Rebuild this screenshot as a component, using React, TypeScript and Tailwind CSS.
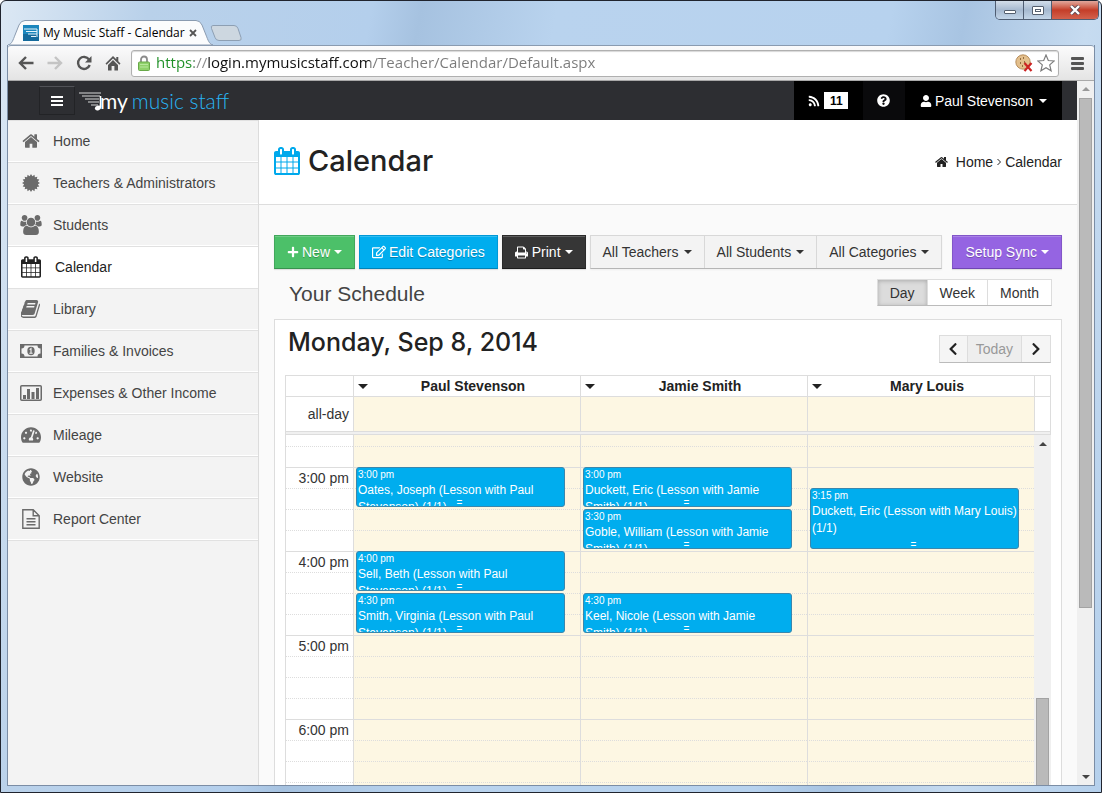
import type { ReactNode } from "react";
import {
  FaChevronLeft,
  FaChevronRight,
  FaGlobeAmericas,
  FaPlus,
  FaQuestionCircle,
  FaRegEdit,
  FaRss,
  FaTachometerAlt,
  FaUser,
} from "react-icons/fa";

type IconProps = { className?: string };

function HomeIcon({ className }: IconProps) {
  return (
    <svg viewBox="64 128 1664 1536" fill="currentColor" className={className} aria-hidden="true">
      <path d="M1472 992v480q0 26-19 45t-45 19h-384v-384h-256v384h-384q-26 0-45-19t-19-45v-480q0-1 .5-3t.5-3l575-474 575 474q1 2 1 6zm223-69l-62 74q-8 9-21 11h-3q-13 0-21-7l-692-577-692 577q-12 8-24 7-13-2-21-11l-62-74q-8-10-7-23.5t11-21.5l719-599q32-26 76-26t76 26l244 204v-195q0-14 9-23t23-9h192q14 0 23 9t9 23v408l219 182q10 8 11 21.5t-7 23.5z" />
    </svg>
  );
}

function CalendarIcon({ className }: IconProps) {
  return (
    <svg viewBox="64 0 1664 1792" fill="currentColor" className={className} aria-hidden="true">
      <path d="M192 1664h288v-288h-288v288zm352 0h320v-288h-320v288zm-352-352h288v-320h-288v320zm352 0h320v-320h-320v320zm-352-384h288v-288h-288v288zm736 736h320v-288h-320v288zm-384-736h320v-288h-320v288zm768 736h288v-288h-288v288zm-384-352h320v-320h-320v320zm-352-864v-288q0-13-9.5-22.5t-22.5-9.5h-64q-13 0-22.5 9.5t-9.5 22.5v288q0 13 9.5 22.5t22.5 9.5h64q13 0 22.5-9.5t9.5-22.5zm736 864h288v-320h-288v320zm-384-384h320v-288h-320v288zm384 0h288v-288h-288v288zm32-480v-288q0-13-9.5-22.5t-22.5-9.5h-64q-13 0-22.5 9.5t-9.5 22.5v288q0 13 9.5 22.5t22.5 9.5h64q13 0 22.5-9.5t9.5-22.5zm384-64v1280q0 52-38 90t-90 38h-1408q-52 0-90-38t-38-90v-1280q0-52 38-90t90-38h128v-96q0-66 47-113t113-47h64q66 0 113 47t47 113v96h384v-96q0-66 47-113t113-47h64q66 0 113 47t47 113v96h128q52 0 90 38t38 90z" />
    </svg>
  );
}

function GroupIcon({ className }: IconProps) {
  return (
    <svg viewBox="-64 0 1920 1792" fill="currentColor" className={className} aria-hidden="true">
      <path d="M529 896q-162 5-265 128h-134q-82 0-138-40.5t-56-118.5q0-353 124-353 6 0 43.5 21t97.5 42.5 119 21.5q67 0 133-23-5 37-5 66 0 139 81 256zm1071 637q0 120-73 189.5t-194 69.5h-874q-121 0-194-69.5t-73-189.5q0-53 3.5-103.5t14-109 26.5-108.5 43-97.5 62-81 85.5-53.5 111.5-20q10 0 43 21.5t73 48 107 48 135 21.5 135-21.5 107-48 73-48 43-21.5q61 0 111.5 20t85.5 53.5 62 81 43 97.5 26.5 108.5 14 109 3.5 103.5zm-1024-1277q0 106-75 181t-181 75-181-75-75-181 75-181 181-75 181 75 75 181zm704 384q0 159-112.5 271.5t-271.5 112.5-271.5-112.5-112.5-271.5 112.5-271.5 271.5-112.5 271.5 112.5 112.5 271.5zm576 225q0 78-56 118.5t-138 40.5h-134q-103-123-265-128 81-117 81-256 0-29-5-66 66 23 133 23 59 0 119-21.5t97.5-42.5 43.5-21q124 0 124 353zm-128-609q0 106-75 181t-181 75-181-75-75-181 75-181 181-75 181 75 75 181z" />
    </svg>
  );
}

function BookIcon({ className }: IconProps) {
  return (
    <svg viewBox="64 128 1664 1536" fill="currentColor" className={className} aria-hidden="true">
      <path d="M1639 478q40 57 18 129l-275 906q-19 64-76.5 107.5t-122.5 43.5h-923q-77 0-148.5-53.5t-99.5-131.5q-24-67-2-127 0-4 3-27t4-37q1-8-3-21.5t-3-19.5q2-11 8-21t16.5-23.5 16.5-23.5q23-38 45-91.5t30-91.5q3-10 .5-30t-.5-28q3-11 17-28t17-23q21-36 42-92t25-90q1-9-2.5-32t.5-28q4-13 22-30.5t22-22.5q19-26 42.5-84.5t27.5-96.5q1-8-3-25.5t-2-26.5q2-8 9-18t18-23 17-21q8-12 16.5-30.5t15-35 16-36 19.5-32 26.5-23.5 36-11.5 47.5 5.5l-1 3q38-9 51-9h761q74 0 114 56t18 130l-274 906q-36 119-71.5 153.5t-128.5 34.5h-869q-27 0-38 15-11 16-1 43 24 70 144 70h923q29 0 56-15.5t35-41.5l300-987q7-22 5-57 38 15 59 43zm-1064 2q-4 13 2 22.5t20 9.5h608q13 0 25.5-9.5t16.5-22.5l21-64q4-13-2-22.5t-20-9.5h-608q-13 0-25.5 9.5t-16.5 22.5zm-83 256q-4 13 2 22.5t20 9.5h608q13 0 25.5-9.5t16.5-22.5l21-64q4-13-2-22.5t-20-9.5h-608q-13 0-25.5 9.5t-16.5 22.5z" />
    </svg>
  );
}

function PrintIcon({ className }: IconProps) {
  return (
    <svg viewBox="64 128 1664 1536" fill="currentColor" className={className} aria-hidden="true">
      <path d="M448 1536h896v-256h-896v256zm0-640h896v-384h-160q-40 0-68-28t-28-68v-160h-640v640zm1152 64q0-26-19-45t-45-19-45 19-19 45 19 45 45 19 45-19 19-45zm128 0v416q0 13-9.5 22.5t-22.5 9.5h-224v160q0 40-28 68t-68 28h-960q-40 0-68-28t-28-68v-160h-224q-13 0-22.5-9.5t-9.5-22.5v-416q0-79 56.5-135.5t135.5-56.5h64v-544q0-40 28-68t68-28h672q40 0 88 20t76 48l152 152q28 28 48 76t20 88v256h64q79 0 135.5 56.5t56.5 135.5z" />
    </svg>
  );
}

function SealIcon({ className }: IconProps) {
  const points = Array.from({ length: 32 }, (_, i) => {
    const r = i % 2 ? 7 : 9;
    const a = (i * Math.PI) / 16;
    return `${9 + r * Math.sin(a)},${9 - r * Math.cos(a)}`;
  }).join(" ");
  return (
    <svg viewBox="0 0 18 18" fill="currentColor" className={className} aria-hidden="true">
      <polygon points={points} />
    </svg>
  );
}

function MoneyIcon({ className }: IconProps) {
  return (
    <svg viewBox="0 0 22 14" className={className} aria-hidden="true">
      <path fill="currentColor" fillRule="evenodd" d="M0 0h22v14H0zM4.5 1.5a3 3 0 0 1-3 3v5a3 3 0 0 1 3 3h13a3 3 0 0 1 3-3v-5a3 3 0 0 1-3-3z" />
      <ellipse cx="11" cy="7" rx="3.7" ry="4.2" fill="currentColor" />
      <path d="M9.6 5.6 11 4.6V9M9.4 9.3h3.2" fill="none" stroke="#f3f3f3" strokeWidth="1.1" />
    </svg>
  );
}

function BarsIcon({ className }: IconProps) {
  return (
    <svg viewBox="0 0 22 16" className={className} aria-hidden="true">
      <rect x=".75" y=".75" width="20.5" height="14.5" rx="1" fill="none" stroke="currentColor" strokeWidth="1.5" />
      <path d="M3 10h3v4H3zM7 4h3v10H7zM11.500 7h3v7h-3zM16 3h3v11h-3z" fill="currentColor" />
    </svg>
  );
}

function ReportIcon({ className }: IconProps) {
  return (
    <svg viewBox="0 0 18 20" fill="none" stroke="currentColor" strokeWidth="1.4" className={className} aria-hidden="true">
      <path d="M.8.8h10.400l6 6v12.400H.8zM11.200.8v6h6M4.500 9.700h9M4.500 12.700h9M4.500 15.700h9" />
    </svg>
  );
}

function Triangle({ className, up }: IconProps & { up?: boolean }) {
  return (
    <svg viewBox="0 0 8 4" fill="currentColor" className={className} aria-hidden="true">
      <path d={up ? "M0 4h8L4 0z" : "M0 0h8L4 4z"} />
    </svg>
  );
}

function Caret() {
  return <Triangle className="ml-1 h-1 w-2 shrink-0" />;
}

const navItems: { label: string; icon: ReactNode; active?: boolean }[] = [
  { label: "Home", icon: <HomeIcon className="h-4 w-5" /> },
  { label: "Teachers & Administrators", icon: <SealIcon className="size-[18px]" /> },
  { label: "Students", icon: <GroupIcon className="h-5 w-[22px]" /> },
  { label: "Calendar", icon: <CalendarIcon className="h-[22px] w-5" />, active: true },
  { label: "Library", icon: <BookIcon className="h-[18px] w-5" /> },
  { label: "Families & Invoices", icon: <MoneyIcon className="h-3.5 w-[22px]" /> },
  { label: "Expenses & Other Income", icon: <BarsIcon className="h-4 w-[22px]" /> },
  { label: "Mileage", icon: <FaTachometerAlt className="h-[18px] w-5" /> },
  { label: "Website", icon: <FaGlobeAmericas className="size-[18px]" /> },
  { label: "Report Center", icon: <ReportIcon className="h-5 w-[18px]" /> },
];

const teachers = ["Paul Stevenson", "Jamie Smith", "Mary Louis"];

type Lesson = { teacher: number; slot: number; tall?: boolean; time: string; title: string };

// slot = number of quarter hours after 3:00 pm
const lessons: Lesson[] = [
  { teacher: 0, slot: 0, time: "3:00 pm", title: "Oates, Joseph (Lesson with Paul Stevenson) (1/1)" },
  { teacher: 0, slot: 4, time: "4:00 pm", title: "Sell, Beth (Lesson with Paul Stevenson) (1/1)" },
  { teacher: 0, slot: 6, time: "4:30 pm", title: "Smith, Virginia (Lesson with Paul Stevenson) (1/1)" },
  { teacher: 1, slot: 0, time: "3:00 pm", title: "Duckett, Eric (Lesson with Jamie Smith) (1/1)" },
  { teacher: 1, slot: 2, time: "3:30 pm", title: "Goble, William (Lesson with Jamie Smith) (1/1)" },
  { teacher: 1, slot: 6, time: "4:30 pm", title: "Keel, Nicole (Lesson with Jamie Smith) (1/1)" },
  { teacher: 2, slot: 1, tall: true, time: "3:15 pm", title: "Duckett, Eric (Lesson with Mary Louis) (1/1)" },
];

const slots = Array.from({ length: 24 }, (_, i) => i - 1);

function Logo() {
  return (
    <a href="#home" className="ml-1 flex items-center font-[Lato,sans-serif] text-[21px] leading-7 font-light">
      <svg viewBox="0 0 25 20" className="-mr-1 h-5 w-[25px]" aria-hidden="true">
        <path d="M0 2h22M3 5h18M6 8h14M9 11h11M12 14h7" stroke="#d8d8d8" strokeWidth="1.2" />
        <path d="M21.500 5v11" stroke="#fff" strokeWidth="1.600" />
        <ellipse cx="19" cy="17" rx="3.200" ry="2.300" fill="#fff" transform="rotate(-20 19 17)" />
      </svg>
      <span className="font-normal text-white">my</span>
      <span className="ml-1 text-[#29b4f2]">music staff</span>
    </a>
  );
}

function TitleBar() {
  return (
    <div className="flex h-[44px] items-end pl-px">
      <div className="relative flex h-[25px] w-[206px] shrink-0 items-center pl-[15px]">
        <svg viewBox="0 0 206 25" preserveAspectRatio="none" className="absolute inset-0 size-full" aria-hidden="true">
          <path d="M0 25C4 24 5 20 7 15l4-10q2-4.500 6-4.500h171q4 0 6 4.500l4 10c2 5 3 9 7 10z" fill="#fbfcfd" stroke="#8a9bb0" />
        </svg>
        <svg viewBox="0 0 16 16" className="relative size-4" aria-hidden="true">
          <path fill="#1b86bd" d="M0 0h16v16H0z" />
          <path fill="#156a9c" d="M0 9h16v7H0z" />
          <path d="M1 4h13M3 6.500h11M5 9h9M8 11.500h5M14 4v8" stroke="#e6f4fb" fill="none" />
        </svg>
        <span className="relative ml-1 font-['Open_Sans',sans-serif] text-xs whitespace-nowrap text-black">
          My Music Staff - Calendar
        </span>
        <button type="button" aria-label="Close tab" className="relative ml-1 size-2 shrink-0 text-[#555]">
          <svg viewBox="0 0 8 8" stroke="currentColor" strokeWidth="1.800">
            <path d="m1 1 6 6M7 1 1 7" />
          </svg>
        </button>
      </div>
      <button type="button" aria-label="New tab" className="-ml-1 mb-1 h-4 w-8 text-[#8d9fb3]">
        <svg viewBox="0 0 32 16" className="size-full" fill="#cdd7e0" stroke="currentColor">
          <path d="M3 .5h21q3 0 4 3l3 9q1 3-2 3H9q-3 0-4-3L1.500 3.500q-1-3 1.500-3z" />
        </svg>
      </button>
      <div className="-mr-1 ml-auto flex h-[19px] self-start overflow-hidden rounded-b-[5px] border border-t-0 border-[#4f5d72]">
        <button type="button" aria-label="Minimize" className="flex w-7 items-center justify-center border-r border-[#4f5d72] bg-linear-to-b from-[#d3deea] via-[#a6b9d0] to-[#c3d5e8]">
          <span className="mt-1 h-1 w-3 rounded-[1px] border border-[#555f6e] bg-white" />
        </button>
        <button type="button" aria-label="Maximize" className="flex w-7 items-center justify-center border-r border-[#4f5d72] bg-linear-to-b from-[#d3deea] via-[#a6b9d0] to-[#c3d5e8]">
          <span className="flex h-[9px] w-3 items-center justify-center rounded-[1px] border border-[#555f6e] bg-white">
            <span className="h-[3px] w-1.5 border border-[#555f6e]" />
          </span>
        </button>
        <button type="button" aria-label="Close" className="flex w-[46px] items-center justify-center bg-linear-to-b from-[#e0a79c] via-[#c43d28] to-[#d3614c]">
          <svg viewBox="0 0 12 10" className="h-2.5 w-3" aria-hidden="true">
            <path d="m2 1 8 8M10 1 2 9" stroke="#5b4a52" strokeWidth="4" />
            <path d="m2 1 8 8M10 1 2 9" stroke="#fff" strokeWidth="2.400" />
          </svg>
        </button>
      </div>
    </div>
  );
}

function Toolbar() {
  return (
    <div className="flex h-9 items-center rounded-t-[3px] border-t border-b border-t-[#8a9bb0] border-b-[#a9a9a9] bg-linear-to-b from-[#fbfbfc] to-[#e4e4e4] px-2.5 text-[#555]">
      <button type="button" aria-label="Back">
        <svg viewBox="0 0 16 14" className="h-3.5 w-4" fill="none" stroke="currentColor" strokeWidth="2.400">
          <path d="M8 1 2 7l6 6M2 7h13.500" />
        </svg>
      </button>
      <button type="button" aria-label="Forward" className="ml-[13px] text-[#c4c4c4]">
        <svg viewBox="0 0 16 14" className="h-3.5 w-4" fill="none" stroke="currentColor" strokeWidth="2.400">
          <path d="m8 1 6 6-6 6M14 7H.5" />
        </svg>
      </button>
      <button type="button" aria-label="Reload" className="ml-[13px]">
        <svg viewBox="0 0 16 16" className="size-4">
          <path d="M13 4.500A6 6 0 1 0 13.700 10" fill="none" stroke="currentColor" strokeWidth="2.400" />
          <path d="M15.500 1v6.500H9z" fill="currentColor" />
        </svg>
      </button>
      <button type="button" aria-label="Home page" className="ml-[13px]">
        <svg viewBox="0 0 16 16" className="size-4" fill="currentColor">
          <path d="M8 1 .5 8.500 1.600 9.700 8 3.500l6.400 6.200 1.100-1.200-2.200-2.200V2h-2v2.300zM3 10v5.500h3.600V11h2.800v4.500H13V10L8 5z" />
        </svg>
      </button>
      <div className="ml-[10px] flex h-[27px] flex-1 items-center rounded-[3px] border border-[#b0b0b0] bg-white pr-[3px] pl-1.5 shadow-[inset_0_1px_1px_#d8d8d8]">
        <svg viewBox="0 0 12 16" className="h-4 w-3" aria-hidden="true">
          <path d="M3 8V4.500a3 3 0 0 1 6 0V8" fill="none" stroke="#8b8b8b" strokeWidth="1.800" />
          <rect x=".5" y="7" width="11" height="8.500" rx="1" fill="#8fd16a" stroke="#68a948" />
          <path d="M2 9.500h8M2 12h8" stroke="#b8e79c" />
        </svg>
        <input
          type="text"
          aria-label="Address"
          defaultValue="https://login.mymusicstaff.com/Teacher/Calendar/Default.aspx"
          className="ml-1.5 min-w-0 flex-1 bg-[linear-gradient(90deg,#1c8f24_38px,#888_38px,#888_51px,#111_51px,#111_214px,#7a7a7a_214px)] bg-clip-text font-['Open_Sans',sans-serif] text-[15px] text-transparent outline-none"
        />
        <svg viewBox="0 0 18 18" className="size-[18px]" aria-hidden="true">
          <circle cx="8" cy="8" r="7.200" fill="#e3bf8c" stroke="#a97b45" strokeWidth=".8" />
          <path d="M5 5h1M8 4h1M5 9h1M9 8h1M7 12h1" stroke="#7b5226" strokeWidth="1.300" />
          <path d="m9.500 9 7 8M16.500 9l-7 8" stroke="#c22" strokeWidth="2.200" />
        </svg>
        <button type="button" aria-label="Bookmark" className="ml-1 size-[18px]">
          <svg viewBox="0 0 18 18" fill="#fff" stroke="#7d7d7d" strokeWidth="1.200">
            <path d="m9 1 2.300 5.500 5.900.5-4.500 3.900 1.400 5.900L9 13.700l-5.100 3.100 1.400-5.900L.8 7l5.900-.5z" />
          </svg>
        </button>
      </div>
      <button type="button" aria-label="Browser menu" className="ml-3 flex flex-col gap-0.5">
        <span className="h-[3px] w-[13px] rounded-[1px] bg-[#555]" />
        <span className="h-[3px] w-[13px] rounded-[1px] bg-[#555]" />
        <span className="h-[3px] w-[13px] rounded-[1px] bg-[#555]" />
      </button>
    </div>
  );
}

function SiteHeader() {
  return (
    <header className="flex h-[39px] shrink-0 items-center bg-[#2d2e32] pr-[15px] pl-[31px] text-white">
      <button type="button" aria-label="Toggle menu" className="flex h-[29px] w-9 flex-col items-center justify-center gap-0.5 border border-[#222326] border-t-[#515257]">
        <span className="h-0.5 w-3 bg-white" />
        <span className="h-0.5 w-3 bg-white" />
        <span className="h-0.5 w-3 bg-white" />
      </button>
      <Logo />
      <div className="ml-auto flex h-full items-stretch">
        <a href="#news" className="flex w-[69px] items-center justify-center gap-1 bg-black">
          <FaRss className="size-3" />
          <span className="flex h-[17px] w-6 items-center justify-center bg-white text-xs font-bold text-black">11</span>
        </a>
        <a href="#help" aria-label="Help" className="flex w-[42px] items-center justify-center bg-[#0a0a0c]">
          <FaQuestionCircle className="size-[13px]" />
        </a>
        <button type="button" className="flex items-center bg-black px-[15px]">
          <FaUser className="mr-[3px] size-3" />
          Paul Stevenson
          <Triangle className="ml-1.5 h-1 w-2" />
        </button>
      </div>
    </header>
  );
}

function Sidebar() {
  return (
    <nav className="w-[251px] shrink-0 border-r border-[#dcdcdc] bg-[#f3f3f3]">
      <ul>
        {navItems.map(({ label, icon, active }) => (
          <li key={label} className={active ? "border-y border-t-[#e1e1e1] border-b-white bg-white" : "border-y border-t-[#e1e1e1] border-b-white"}>
            <a
              href="#page"
              className={active ? "flex h-10 items-center pl-3 text-[#222]" : "flex h-10 items-center pl-3 text-[#6b6b6b]"}
            >
              <span className="flex w-[22px] justify-center">{icon}</span>
              <span className={active ? "ml-[13px] text-[#222]" : "ml-[11px] text-[#444]"}>{label}</span>
            </a>
          </li>
        ))}
      </ul>
      <div className="border-t border-[#e1e1e1]" />
    </nav>
  );
}

function ActionBar() {
  return (
    <div className="flex h-[34px] items-stretch gap-1 whitespace-nowrap text-white [&>button]:shadow-[inset_0_1px_0_#ffffff33,0_1px_1px_#0000001a] [&>button]:[text-shadow:0_1px_0_#00000040]">
      <button type="button" className="flex items-center border border-[#42a75c] border-b-[#38924f] bg-[#4cc069] px-3">
        <FaPlus className="mr-[3px] size-3" />
        New
        <Caret />
      </button>
      <button type="button" className="flex items-center border border-[#0098d6] border-b-[#0083b8] bg-[#00adee] px-3">
        <FaRegEdit className="mr-[3px] size-3.5" />
        Edit Categories
      </button>
      <button type="button" className="flex items-center border border-[#2b2b2b] border-b-[#1c1c1c] bg-[#363636] px-3">
        <PrintIcon className="mr-1 size-[13px]" />
        Print
        <Caret />
      </button>
      <div className="flex divide-x divide-[#d8d8d8] border border-[#d8d8d8] border-b-[#b5b5b5] bg-[#f3f3f3] text-[#333] shadow-xs">
        {["All Teachers", "All Students", "All Categories"].map((label) => (
          <button key={label} type="button" className="flex items-center px-3">
            {label}
            <Triangle className="ml-[5px] h-1 w-2" />
          </button>
        ))}
      </div>
      <button type="button" className="ml-auto flex items-center border border-[#8256c8] border-b-[#6f45b3] bg-[#9564e2] px-3">
        Setup Sync
        <Caret />
      </button>
    </div>
  );
}

function LessonCard({ lesson }: { lesson: Lesson }) {
  return (
    <div
      className={
        lesson.tall
          ? "absolute -top-px right-[15px] left-0.5 z-10 h-[61px] overflow-hidden rounded-[3px] border border-[#3a87ad] bg-[#00adee] px-px text-white"
          : "absolute -top-px right-[15px] left-0.5 z-10 h-10 overflow-hidden rounded-[3px] border border-[#3a87ad] bg-[#00adee] px-px text-white"
      }
    >
      <p className="text-[10px] leading-[14px]">{lesson.time}</p>
      <p className="text-xs leading-[17px]">{lesson.title}</p>
      <span className="absolute bottom-0 left-1/2 -ml-1 text-[10px] leading-[6px]">=</span>
    </div>
  );
}

function DayGrid() {
  return (
    <div className="mt-3 flex min-h-0 flex-1 flex-col">
      <table className="w-full shrink-0 table-fixed border-separate border-spacing-0 border-t border-r border-[#ddd] [&_td]:border-b [&_td]:border-l [&_td]:border-[#ddd] [&_th]:border-b [&_th]:border-l [&_th]:border-[#ddd]">
        <colgroup>
          <col className="w-[68px]" />
          <col />
          <col />
          <col />
          <col className="w-4" />
        </colgroup>
        <thead>
          <tr className="h-[21px]">
            <th className="p-0" />
            {teachers.map((name) => (
              <th key={name} scope="col" className="p-0 text-[#222]">
                <div className="flex h-5 items-center">
                  <button type="button" aria-label={`Options for ${name}`} className="flex w-[18px] justify-center">
                    <Triangle className="h-[5px] w-2.5" />
                  </button>
                  <span className="flex-1 pr-1.5 text-center">{name}</span>
                </div>
              </th>
            ))}
            <th className="p-0" />
          </tr>
        </thead>
        <tbody>
          <tr className="h-[35px]">
            <td className="p-0 pr-1 text-right">all-day</td>
            {teachers.map((name) => (
              <td key={name} className="bg-[#fdf7e3] p-0" />
            ))}
            <td className="p-0" />
          </tr>
        </tbody>
      </table>
      <div className="h-[3px] shrink-0 border-x border-b border-[#ddd] bg-[#f0f0f0]" />
      <div className="flex min-h-0 flex-1 overflow-hidden">
        <div className="min-w-0 flex-1">
          <table className="w-full table-fixed border-separate border-spacing-0">
            <colgroup>
              <col className="w-[68px]" />
              <col />
              <col />
              <col />
            </colgroup>
            <tbody>
              <tr className="h-[11px]">
                <td className="border-l border-[#ddd] p-0" />
                {teachers.map((name) => (
                  <td key={name} className="border-l border-[#ddd] bg-[#fdf7e3] p-0" />
                ))}
              </tr>
              {slots.map((slot) => {
                const onHour = slot >= 0 && slot % 4 === 0;
                return (
                  <tr key={slot} className="h-[21px]">
                    <td
                      className={
                        onHour
                          ? "border-t border-l border-[#ddd] p-0 pr-1 text-right leading-5"
                          : "border-t border-l border-[#ddd] p-0 [border-top-style:dotted]"
                      }
                    >
                      {onHour && `${3 + slot / 4}:00 pm`}
                    </td>
                    {teachers.map((name, column) => {
                      const lesson = lessons.find((l) => l.teacher === column && l.slot === slot);
                      return (
                        <td
                          key={name}
                          className={
                            onHour
                              ? "relative border-t border-l border-[#ddd] bg-[#fdf7e3] p-0"
                              : "relative border-t border-l border-[#ddd] bg-[#fdf7e3] p-0 [border-top-style:dotted]"
                          }
                        >
                          {lesson && <LessonCard lesson={lesson} />}
                        </td>
                      );
                    })}
                  </tr>
                );
              })}
            </tbody>
          </table>
        </div>
        <div className="flex w-[17px] shrink-0 flex-col items-center bg-[#f0f0f0] pt-[7px]">
          <Triangle up className="h-1 w-2 text-[#444]" />
          <div className="mt-[252px] w-[13px] flex-1 border border-b-0 border-[#a3a3a3] bg-[#bababa]" />
        </div>
      </div>
    </div>
  );
}

function CalendarPage() {
  return (
    <main className="flex min-w-0 flex-1 flex-col bg-[#fafafa]">
      <div className="flex h-[85px] shrink-0 items-center justify-between border-b border-[#ddd] bg-white px-[15px]">
        <h1 className="flex items-center gap-2 pb-0.5 font-[Inter,sans-serif] text-[29px] font-medium text-[#222]">
          <CalendarIcon className="h-7 w-[26px] text-[#00a9ec]" />
          Calendar
        </h1>
        <div className="flex items-center gap-1 text-[#222]">
          <HomeIcon className="mr-1 h-3 w-[13px]" />
          <a href="#home">Home</a>
          <svg viewBox="0 0 4 8" className="h-2 w-1" fill="none" stroke="currentColor" aria-hidden="true">
            <path d="m.5 1 3 3-3 3" />
          </svg>
          <span>Calendar</span>
        </div>
      </div>
      <div className="flex min-h-0 flex-1 flex-col px-[15px] pt-[30px]">
        <ActionBar />
        <div className="mt-2.5 flex items-start justify-between pr-2.5 pl-[15px]">
          <h2 className="text-[21px] leading-[30px] text-[#444]">Your Schedule</h2>
          <div className="flex h-[27px] divide-x divide-[#ddd] border border-[#ddd] border-b-[#bbb] bg-white text-[#333]">
            <button type="button" aria-pressed="true" className="bg-[#dcdcdc] px-3 shadow-[inset_0_1px_4px_#aaaaaa]">
              Day
            </button>
            <button type="button" className="px-3">Week</button>
            <button type="button" className="px-3">Month</button>
          </div>
        </div>
        <section className="mt-2.5 flex min-h-0 flex-1 flex-col border border-b-0 border-[#ddd] bg-white px-2.5 pt-1.5">
          <div className="flex h-[37px] items-start justify-between pl-[3px]">
            <h2 className="font-[Inter,sans-serif] text-[25px] leading-8 font-medium text-[#222]">Monday, Sep 8, 2014</h2>
            <div className="mt-[9px] flex h-7 divide-x divide-[#ddd] border border-[#ddd] border-b-[#bbb] bg-[#f5f5f5] text-[#222]">
              <button type="button" aria-label="Previous day" className="flex w-7 items-center justify-center">
                <FaChevronLeft className="size-3.5" />
              </button>
              <button type="button" disabled className="bg-[#eee] px-2 text-[#999]">Today</button>
              <button type="button" aria-label="Next day" className="flex w-7 items-center justify-center">
                <FaChevronRight className="size-3.5" />
              </button>
            </div>
          </div>
          <DayGrid />
        </section>
      </div>
    </main>
  );
}

export default function App() {
  return (
    <div className="flex h-screen flex-col overflow-hidden rounded-t-md border border-[#20242e] bg-[linear-gradient(100deg,#dce8f4_0%,#b9d1ea_12%,#b4cfec_30%,#a6c2e0_34%,#b9d3ee_45%,#b7d2ee_72%,#a8c4e2_78%,#c6dbf0_88%,#b5d0ec_100%)] px-[6px] pb-[6px] font-['Liberation_Sans',sans-serif] text-sm text-[#333]">
      <TitleBar />
      <div className="flex min-h-0 flex-1 flex-col border-x border-b border-[#7b8da5]">
        <Toolbar />
        <div className="flex min-h-0 flex-1">
          <div className="flex min-w-0 flex-1 flex-col">
            <SiteHeader />
            <div className="flex min-h-0 flex-1">
              <Sidebar />
              <CalendarPage />
            </div>
          </div>
          <div className="flex w-[17px] shrink-0 flex-col items-center bg-[#f0f0f0] py-1.5">
            <Triangle up className="h-1 w-2 text-[#999]" />
            <div className="mt-[7px] h-[510px] w-[13px] border border-[#a3a3a3] bg-[#bababa]" />
            <Triangle className="mt-auto h-1 w-2 text-[#444]" />
          </div>
        </div>
      </div>
    </div>
  );
}
